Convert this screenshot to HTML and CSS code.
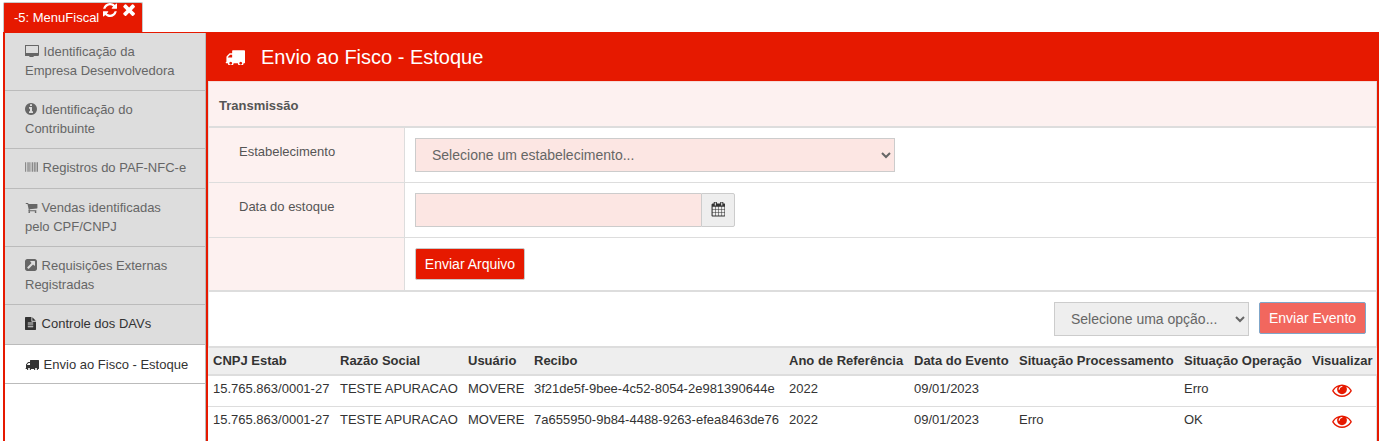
FILE: index.html
```html
<!DOCTYPE html>
<html lang="pt-BR">
<head>
<meta charset="utf-8">
<title>Envio ao Fisco - Estoque</title>
<link rel="stylesheet" href="styles.css">
</head>
<body>
<div class="tabs">
  <div class="tab">
    <span class="tab-label">-5: MenuFiscal</span>
    <svg class="tab-icon" viewBox="0 128 1536 1536"><path d="M1511 1056q0 5-1 7-64 268-268 434.500t-478 166.500q-146 0-282.500-55t-243.500-157l-129 129q-19 19-45 19t-45-19-19-45v-448q0-26 19-45t45-19h448q26 0 45 19t19 45-19 45l-137 137q71 66 161 102t187 36q134 0 250-65t186-179q11-17 53-117 8-23 30-23h192q13 0 22.500 9.500t9.500 22.500zm25-800v448q0 26-19 45t-45 19h-448q-26 0-45-19t-19-45 19-45l138-138q-148-137-349-137-134 0-250 65t-186 179q-11 17-53 117-8 23-30 23h-199q-13 0-22.500-9.500t-9.500-22.500v-7q65-268 270-434.500t480-166.500q146 0 284 55.500t245 156.500l130-129q19-19 45-19t45 19 19 45z"/></svg>
    <svg class="tab-icon tab-close" viewBox="282 238 1208 1316"><path d="M1490 1322q0 40-28 68l-136 136q-28 28-68 28t-68-28l-294-294-294 294q-28 28-68 28t-68-28l-136-136q-28-28-28-68t28-68l294-294-294-294q-28-28-28-68t28-68l136-136q28-28 68-28t68 28l294 294 294-294q28-28 68-28t68 28l136 136q28 28 28 68t-28 68l-294 294 294 294q28 28 28 68z"/></svg>
  </div>
</div>
<div class="shell">
  <nav class="side">
    <a class="item"><svg class="ico ico-desk" viewBox="0 64 1792 1536"><path d="M1664 1056v-832q0-13-9.500-22.500t-22.500-9.500h-1472q-13 0-22.500 9.500t-9.500 22.500v832q0 13 9.500 22.500t22.500 9.500h1472q13 0 22.500-9.500t9.500-22.500zm128-832v1088q0 66-47 113t-113 47h-544q0 37 16 77.500t32 71 16 43.500q0 26-19 45t-45 19h-512q-26 0-45-19t-19-45q0-14 16-44t32-70 16-78h-544q-66 0-113-47t-47-113v-1088q0-66 47-113t113-47h1632q66 0 113 47t47 113z"/></svg> Identificação da<br>Empresa Desenvolvedora</a>
    <a class="item"><svg class="ico ico-sq" viewBox="128 128 1536 1536"><path d="M1152 1376v-160q0-14-9-23t-23-9h-96v-512q0-14-9-23t-23-9h-320q-14 0-23 9t-9 23v160q0 14 9 23t23 9h96v320h-96q-14 0-23 9t-9 23v160q0 14 9 23t23 9h448q14 0 23-9t9-23zm-128-896v-160q0-14-9-23t-23-9h-192q-14 0-23 9t-9 23v160q0 14 9 23t23 9h192q14 0 23-9t9-23zm640 416q0 209-103 385.500t-279.500 279.500-385.500 103-385.500-103-279.500-279.500-103-385.500 103-385.500 279.500-279.500 385.500-103 385.500 103 279.500 279.500 103 385.500z"/></svg> Identificação do<br>Contribuinte</a>
    <a class="item item-one"><svg class="ico ico-bar" viewBox="0 0 14 10"><path d="M0 0h1v10H0zM2 0h.8v10H2zM3.600 0h1.400v10H3.600zM6 0h.8v10H6zM7.600 0h1v10h-1zM9.400 0h1.200v10H9.400zM11.200 0h.8v10h-.8zM12.600 0H14v10h-1.400z"/></svg> Registros do PAF-NFC-e</a>
    <a class="item"><svg class="ico ico-cart" viewBox="0 256 1792 1408"><path d="M704 1536q0 52-38 90t-90 38-90-38-38-90 38-90 90-38 90 38 38 90zm896 0q0 52-38 90t-90 38-90-38-38-90 38-90 90-38 90 38 38 90zm128-1088v512q0 24-16.500 42.500t-40.500 21.500l-1044 122q13 60 13 70 0 16-24 64h920q26 0 45 19t19 45-19 45-45 19h-1024q-26 0-45-19t-19-45q0-11 8-31.500t16-36 21.500-40 15.500-29.500l-177-823h-204q-26 0-45-19t-19-45 19-45 45-19h256q16 0 28.500 6.500t19.500 15.500 13 24.500 8 26 5.500 29.500 4.500 26h1201q26 0 45 19t19 45z"/></svg> Vendas identificadas<br>pelo CPF/CNPJ</a>
    <a class="item"><svg class="ico ico-sq" viewBox="128 128 1536 1536"><path d="M1408 928v-480q0-26-19-45t-45-19h-480q-42 0-59 39-17 41 14 70l144 144-534 534q-19 19-19 45t19 45l102 102q19 19 45 19t45-19l534-534 144 144q18 19 45 19 12 0 25-5 39-17 39-59zm256-512v960q0 119-84.500 203.500t-203.500 84.500h-960q-119 0-203.500-84.500t-84.500-203.500v-960q0-119 84.500-203.500t203.500-84.500h960q119 0 203.500 84.500t84.500 203.500z"/></svg> Requisições Externas<br>Registradas</a>
    <a class="item item-one item-dark"><svg class="ico ico-file" viewBox="128 0 1536 1792"><path d="M1596 476q14 14 28 36h-472v-472q22 14 36 28zm-476 164h544v1056q0 40-28 68t-68 28h-1344q-40 0-68-28t-28-68v-1600q0-40 28-68t68-28h800v544q0 40 28 68t68 28zm160 736v-64q0-14-9-23t-23-9h-704q-14 0-23 9t-9 23v64q0 14 9 23t23 9h704q14 0 23-9t9-23zm0-256v-64q0-14-9-23t-23-9h-704q-14 0-23 9t-9 23v64q0 14 9 23t23 9h704q14 0 23-9t9-23zm0-256v-64q0-14-9-23t-23-9h-704q-14 0-23 9t-9 23v64q0 14 9 23t23 9h704q14 0 23-9t9-23z"/></svg> Controle dos DAVs</a>
    <a class="item item-active"><svg class="ico ico-truck" viewBox="0 256 1792 1280"><path d="M640 1408q0-52-38-90t-90-38-90 38-38 90 38 90 90 38 90-38 38-90zm-384-512h384v-256h-158q-13 0-22 9l-195 195q-9 9-9 22v30zm1280 512q0-52-38-90t-90-38-90 38-38 90 38 90 90 38 90-38 38-90zm256-1088v1024q0 15-4 26.500t-13.500 18.500-16.500 11.500-23.500 6-22.500 2-25.500 0-22.500-.5q0 106-75 181t-181 75-181-75-75-181h-384q0 106-75 181t-181 75-181-75-75-181h-64q-3 0-22.500.5t-25.500 0-22.500-2-23.500-6-16.500-11.500-13.500-18.500-4-26.500q0-26 19-45t45-19v-320q0-8-.5-35t0-38 2.500-34.500 6.500-37 14-30.500 22.500-30l198-198q19-19 50.500-32t58.500-13h160v-192q0-26 19-45t45-19h1024q26 0 45 19t19 45z"/></svg> Envio ao Fisco - Estoque</a>
  </nav>
  <main class="main">
    <header class="head">
      <svg class="head-ico" viewBox="0 256 1792 1280"><path d="M640 1408q0-52-38-90t-90-38-90 38-38 90 38 90 90 38 90-38 38-90zm-384-512h384v-256h-158q-13 0-22 9l-195 195q-9 9-9 22v30zm1280 512q0-52-38-90t-90-38-90 38-38 90 38 90 90 38 90-38 38-90zm256-1088v1024q0 15-4 26.500t-13.500 18.500-16.500 11.500-23.500 6-22.500 2-25.500 0-22.500-.5q0 106-75 181t-181 75-181-75-75-181h-384q0 106-75 181t-181 75-181-75-75-181h-64q-3 0-22.500.5t-25.500 0-22.500-2-23.500-6-16.500-11.500-13.500-18.500-4-26.500q0-26 19-45t45-19v-320q0-8-.5-35t0-38 2.500-34.500 6.500-37 14-30.500 22.500-30l198-198q19-19 50.500-32t58.500-13h160v-192q0-26 19-45t45-19h1024q26 0 45 19t19 45z"/></svg>
      <h1 class="head-title">Envio ao Fisco - Estoque</h1>
    </header>
    <section class="panel">
      <div class="panel-title">Transmissão</div>
      <div class="row">
        <label class="row-label">Estabelecimento</label>
        <div class="row-field">
          <select class="select select-estab"><option>Selecione um estabelecimento...</option></select>
        </div>
      </div>
      <div class="row">
        <label class="row-label">Data do estoque</label>
        <div class="row-field">
          <div class="date">
            <input class="date-input" type="text">
            <span class="date-btn"><svg class="cal" viewBox="0 128 1664 1664"><path d="M192 1664h288v-288h-288v288zm352 0h320v-288h-320v288zm-352-352h288v-320h-288v320zm352 0h320v-320h-320v320zm-352-384h288v-288h-288v288zm736 736h320v-288h-320v288zm-384-736h320v-288h-320v288zm768 736h288v-288h-288v288zm-384-352h320v-320h-320v320zm-352-864v-288q0-13-9.500-22.500t-22.500-9.500h-64q-13 0-22.500 9.500t-9.500 22.500v288q0 13 9.500 22.500t22.500 9.500h64q13 0 22.500-9.500t9.500-22.500zm736 864h288v-320h-288v320zm-384-384h320v-288h-320v288zm384 0h288v-288h-288v288zm32-480v-288q0-13-9.500-22.500t-22.500-9.500h-64q-13 0-22.500 9.500t-9.500 22.500v288q0 13 9.500 22.500t22.500 9.500h64q13 0 22.500-9.500t9.500-22.500zm384-64v1280q0 52-38 90t-90 38h-1408q-52 0-90-38t-38-90v-1280q0-52 38-90t90-38h128v-96q0-66 47-113t113-47h64q66 0 113 47t47 113v96h384v-96q0-66 47-113t113-47h64q66 0 113 47t47 113v96h128q52 0 90 38t38 90z"/></svg></span>
          </div>
        </div>
      </div>
      <div class="row row-last">
        <div class="row-label"></div>
        <div class="row-field"><button class="btn">Enviar Arquivo</button></div>
      </div>
    </section>
    <div class="toolbar">
      <select class="select select-opt"><option>Selecione uma opção...</option></select>
      <button class="btn btn-soft">Enviar Evento</button>
    </div>
    <table class="grid">
      <colgroup>
        <col class="c1"><col class="c2"><col class="c3"><col class="c4"><col class="c5"><col class="c6"><col class="c7"><col class="c8"><col class="c9">
      </colgroup>
      <thead>
        <tr><th>CNPJ Estab</th><th>Razão Social</th><th>Usuário</th><th>Recibo</th><th>Ano de Referência</th><th>Data do Evento</th><th>Situação Processamento</th><th>Situação Operação</th><th>Visualizar</th></tr>
      </thead>
      <tbody>
        <tr><td>15.765.863/0001-27</td><td>TESTE APURACAO</td><td>MOVERE</td><td>3f21de5f-9bee-4c52-8054-2e981390644e</td><td>2022</td><td>09/01/2023</td><td></td><td>Erro</td><td class="eye-cell"><svg class="eye" viewBox="0 256 1792 1280"><path d="M1664 960q-152-236-381-353 61 104 61 225 0 185-131.500 316.500t-316.500 131.500-316.500-131.500-131.500-316.500q0-121 61-225-229 117-381 353 133 205 333.500 326.500t434.500 121.500 434.500-121.500 333.500-326.500zm-720-384q0-20-14-34t-34-14q-125 0-214.500 89.500t-89.500 214.500q0 20 14 34t34 14 34-14 14-34q0-86 61-147t147-61q20 0 34-14t14-34zm848 384q0 34-20 69-140 230-376.500 368.500t-499.500 138.500-499.500-139-376.500-368q-20-35-20-69t20-69q140-229 376.500-368t499.500-139 499.500 139 376.500 368q20 35 20 69z"/></svg></td></tr>
        <tr><td>15.765.863/0001-27</td><td>TESTE APURACAO</td><td>MOVERE</td><td>7a655950-9b84-4488-9263-efea8463de76</td><td>2022</td><td>09/01/2023</td><td>Erro</td><td>OK</td><td class="eye-cell"><svg class="eye" viewBox="0 256 1792 1280"><path d="M1664 960q-152-236-381-353 61 104 61 225 0 185-131.500 316.500t-316.500 131.500-316.500-131.500-131.500-316.500q0-121 61-225-229 117-381 353 133 205 333.500 326.500t434.500 121.500 434.500-121.500 333.500-326.500zm-720-384q0-20-14-34t-34-14q-125 0-214.500 89.500t-89.500 214.500q0 20 14 34t34 14 34-14 14-34q0-86 61-147t147-61q20 0 34-14t14-34zm848 384q0 34-20 69-140 230-376.500 368.500t-499.500 138.500-499.500-139-376.500-368q-20-35-20-69t20-69q140-229 376.500-368t499.500-139 499.500 139 376.500 368q20 35 20 69z"/></svg></td></tr>
      </tbody>
    </table>
  </main>
</div>
</body>
</html>
```
FILE: styles.css
```css
* { box-sizing: border-box; }
html, body { margin: 0; padding: 0; height: 441px; overflow: hidden; background: #fff; }
body { font-family: "Liberation Sans", Arial, sans-serif; font-size: 13px; color: #333; display: flex; flex-direction: column; }

.tabs { height: 32px; padding: 2px 0 0 3px; flex: none; }
.tab { width: 140px; height: 30px; background: #e61900; border: 1px solid #c9c9c9; border-bottom: 0; border-radius: 2px 2px 0 0; display: flex; align-items: flex-start; color: #fff; padding-left: 10px; }
.tab-label { font-size: 13px; line-height: 14px; margin: 8px 0 0 0; white-space: nowrap; }
.tab-icon { width: 14px; height: 14px; margin: 0 0 0 4px; flex: none; fill: #fff; }
.tab-close { width: 12px; height: 13px; margin: 0 0 0 6px; }

.shell { flex: 1; margin: 0 1px 0 3px; display: flex; border: 2px solid #e61900; border-bottom: 0; border-top-width: 1px; min-height: 0; }

.side { width: 201px; flex: none; border-right: 1px solid #bbb; display: flex; flex-direction: column; }
.item { display: block; background: #ddd; color: #666; font-size: 13px; line-height: 19px; padding: 9px 10px 10px 20px; border-bottom: 1px solid #bbb; }
.item-one { padding: 9px 10px 11px 20px; }
.item-dark { color: #333; }
.item-active { background: #fff; color: #333; padding: 10px 10px 9px 20px; }
.ico { display: inline-block; vertical-align: -1px; fill: currentColor; margin-right: 1px; }
.ico-desk { width: 14px; height: 12px; }
.ico-sq { width: 12px; height: 12px; }
.ico-bar { width: 13px; height: 10px; opacity: .75; vertical-align: 0; }
.ico-cart { width: 13px; height: 10px; margin-right: 0; }
.ico-file { width: 11px; height: 13px; vertical-align: -2px; margin-right: 2px; }
.ico-truck { width: 14px; height: 10px; vertical-align: -1px; }

.main { flex: 1; min-width: 0; border-left: 2px solid #e61900; border-right: 1px solid #ddd; display: flex; flex-direction: column; }
.head { height: 48px; flex: none; background: #e61900; color: #fff; display: flex; align-items: center; margin-right: -1px; margin-left: -1px; padding-left: 18px; }
.head-ico { width: 20px; height: 15px; fill: #fff; margin-right: 16px; flex: none; }
.head-title { font-size: 20px; font-weight: 400; line-height: 24px; margin: 0; }

.panel { flex: none; border-left: 1px solid #ddd; }
.panel-title { height: 47px; background: #fdf1f0; border-top: 1px solid #f5dcd8; border-bottom: 2px solid #ddd; font-weight: 700; font-size: 13px; color: #555; line-height: 47px; padding-left: 10px; }
.row { display: flex; height: 55px; border-bottom: 1px solid #ddd; }
.row-last { height: 54px; border-bottom: 2px solid #ddd; }
.row-label { width: 196px; flex: none; background: #fdf1f0; border-right: 1px solid #ddd; color: #555; font-size: 13px; padding: 17px 0 0 30px; line-height: 14px; }
.row-field { flex: 1; padding: 10px 0 0 10px; }

.select { font-family: "Liberation Sans", Arial, sans-serif; font-size: 14px; color: #666; height: 34px; border: 1px solid #ccc; border-radius: 0; padding: 0 6px 0 12px; outline: 0; }
.select-estab { width: 480px; background: #fce6e3; }
.select-opt { width: 195px; background: #eee; }

.date { display: flex; width: 320px; height: 34px; }
.date-input { flex: 1; min-width: 0; background: #fce6e3; border: 1px solid #ccc; border-right: 0; outline: 0; }
.date-btn { width: 34px; background: #eee; border: 1px solid #ccc; border-radius: 0 2px 2px 0; display: flex; align-items: center; justify-content: center; padding: 0 1px 2px 0; }
.cal { width: 14px; height: 15px; fill: #333; }

.btn { font-family: "Liberation Sans", Arial, sans-serif; font-size: 14px; color: #fff; background: #e61900; border: 1px solid #c9c9c9; border-radius: 2px; height: 32px; padding: 0 8px; width: 110px; white-space: nowrap; }
.btn-soft { background: #f2675e; border-color: #7fa6c9; width: 107px; margin-left: 10px; }

.toolbar { height: 54px; flex: none; display: flex; justify-content: flex-end; align-items: flex-start; padding: 10px 10px 0 0; border-left: 1px solid #ddd; }

.grid { width: 100%; table-layout: fixed; border-collapse: separate; border-spacing: 0; }
.c1 { width: 127px; } .c2 { width: 128px; } .c3 { width: 66px; } .c4 { width: 255px; } .c5 { width: 125px; } .c6 { width: 105px; } .c7 { width: 165px; } .c8 { width: 128px; } .c9 { width: 70px; }
.grid th { height: 30px; background: #eee; border-top: 2px solid #ddd; border-bottom: 2px solid #ddd; text-align: left; font-weight: 700; font-size: 13px; padding: 0 0 1px 5px; white-space: nowrap; }
.grid td { height: 31px; border-bottom: 1px solid #ddd; padding: 0 0 5px 5px; font-size: 13px; white-space: nowrap; }
.grid tbody tr:last-child td { border-bottom: 0; padding-bottom: 7px; }
.grid .eye-cell, .grid tbody tr:last-child .eye-cell { padding: 0 0 3px 25px; }
.eye { display: block; width: 20px; height: 14px; fill: #e61900; }
```
